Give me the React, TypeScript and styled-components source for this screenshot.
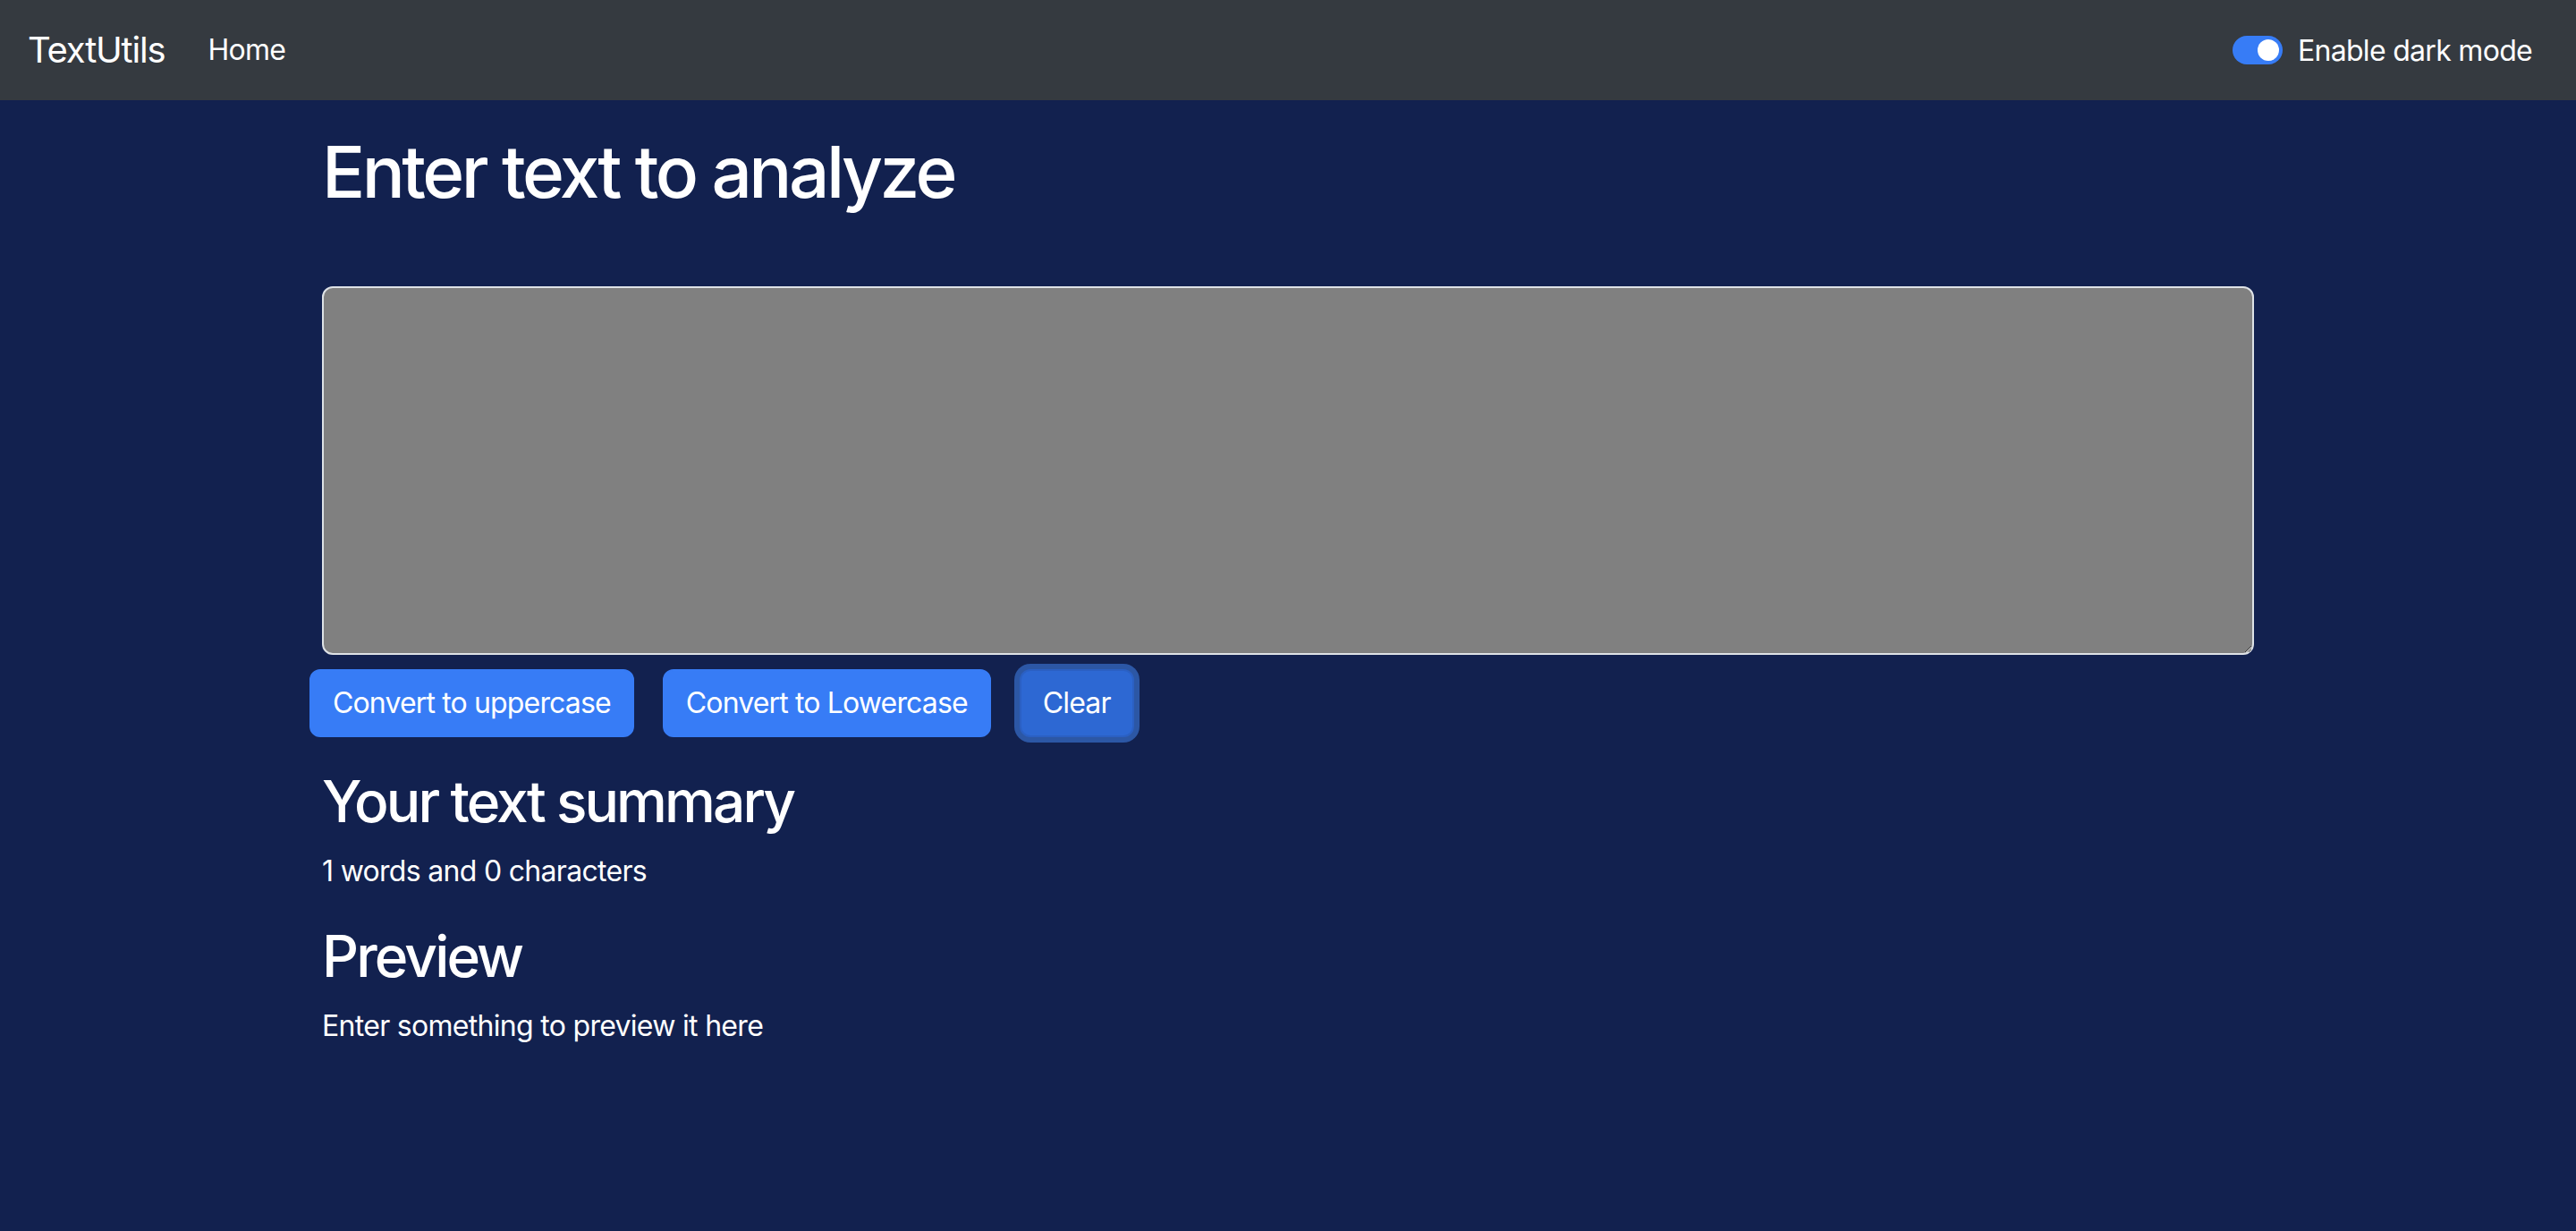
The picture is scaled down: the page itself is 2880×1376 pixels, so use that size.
import React, { useState } from "react";
import styled, { createGlobalStyle } from "styled-components";

const GlobalStyle = createGlobalStyle`
  html, body {
    margin: 0;
    padding: 0;
    background: #12214f;
    font-family: Inter, "Noto Sans", "Liberation Sans", sans-serif;
  }
  body { min-height: 1376px; }
  *, *::before, *::after { box-sizing: border-box; }
`;

const Page = styled.div`
  min-height: 1376px;
  background: #12214f;
  color: #fff;
`;

const NavBar = styled.nav`
  height: 112px;
  background: #353a40;
  display: flex;
  align-items: center;
  padding: 0 49px 0 31px;
`;

const Brand = styled.a`
  font-size: 40px;
  letter-spacing: -1.2px;
  color: #fff;
  text-decoration: none;
  margin-right: 32px;
  line-height: 60px;
`;

const NavLink = styled.a`
  font-size: 32px;
  letter-spacing: -0.7px;
  color: #fff;
  text-decoration: none;
  padding: 0 16px;
  line-height: 48px;
`;

const Spacer = styled.div`
  flex: 1;
`;

const SwitchLabel = styled.label`
  display: flex;
  align-items: center;
  gap: 17px;
  font-size: 32px;
  letter-spacing: -0.7px;
  color: #fff;
  cursor: pointer;
`;

const SwitchTrack = styled.span<{ $on: boolean }>`
  position: relative;
  width: 56px;
  height: 32px;
  border-radius: 16px;
  background: ${(p) => (p.$on ? "#377cf6" : "#fff")};
  display: inline-block;
`;

const SwitchKnob = styled.span<{ $on: boolean }>`
  position: absolute;
  top: 4px;
  left: ${(p) => (p.$on ? "28px" : "4px")};
  width: 24px;
  height: 24px;
  border-radius: 50%;
  background: ${(p) => (p.$on ? "#fff" : "#adb5bd")};
`;

const Container = styled.main`
  width: 2160px;
  margin: 32px auto;
  display: flex;
  flex-direction: column;
`;

const Title = styled.h1`
  font-size: 80px;
  font-weight: 500;
  letter-spacing: -3.5px;
  line-height: 96px;
  margin: 0 0 80px;
`;

const TextArea = styled.textarea`
  width: 100%;
  height: 412px;
  background: #808080;
  color: #fff;
  border: 2px solid #dee2e6;
  border-radius: 12px;
  padding: 12px 24px;
  font-size: 32px;
  line-height: 48px;
  font-family: inherit;
  margin: 0 0 16px;
  display: block;
`;

const ButtonRow = styled.div`
  display: flex;
  gap: 32px;
  margin-left: -14px;
  margin-bottom: 33px;
`;

const Button = styled.button<{ $focused?: boolean }>`
  font-family: inherit;
  font-size: 32px;
  letter-spacing: -0.85px;
  line-height: 48px;
  color: #fff;
  padding: 12px 24px;
  border-radius: 12px;
  cursor: pointer;
  background: ${(p) => (p.$focused ? "#2d68d3" : "#377cf6")};
  border: 2px solid ${(p) => (p.$focused ? "#2b60c3" : "#377cf6")};
  box-shadow: ${(p) => (p.$focused ? "0 0 0 6px #2c57a5" : "none")};
`;

const SubTitle = styled.h2`
  font-size: 64px;
  font-weight: 500;
  letter-spacing: -2.9px;
  line-height: 77px;
  margin: 0 0 16px;
`;

const Text = styled.p`
  font-size: 32px;
  letter-spacing: -0.7px;
  line-height: 48px;
  margin: 0 0 32px;
`;

export default function App() {
  const [text, setText] = useState("");
  const [dark, setDark] = useState(true);
  const words = text.split(" ").length;
  return (
    <>
      <GlobalStyle />
      <Page>
        <NavBar>
          <Brand href="#">TextUtils</Brand>
          <NavLink href="#">Home</NavLink>
          <Spacer />
          <SwitchLabel onClick={() => setDark(!dark)}>
            <SwitchTrack $on={dark}>
              <SwitchKnob $on={dark} />
            </SwitchTrack>
            Enable dark mode
          </SwitchLabel>
        </NavBar>
        <Container>
          <Title>Enter text to analyze</Title>
          <TextArea value={text} onChange={(e) => setText(e.target.value)} />
          <ButtonRow>
            <Button onClick={() => setText(text.toUpperCase())}>Convert to uppercase</Button>
            <Button onClick={() => setText(text.toLowerCase())}>Convert to Lowercase</Button>
            <Button $focused onClick={() => setText("")}>Clear</Button>
          </ButtonRow>
          <SubTitle>Your text summary</SubTitle>
          <Text>
            {words} words and {text.length} characters
          </Text>
          <SubTitle>Preview</SubTitle>
          <Text>{text.length > 0 ? text : "Enter something to preview it here"}</Text>
        </Container>
      </Page>
    </>
  );
}
